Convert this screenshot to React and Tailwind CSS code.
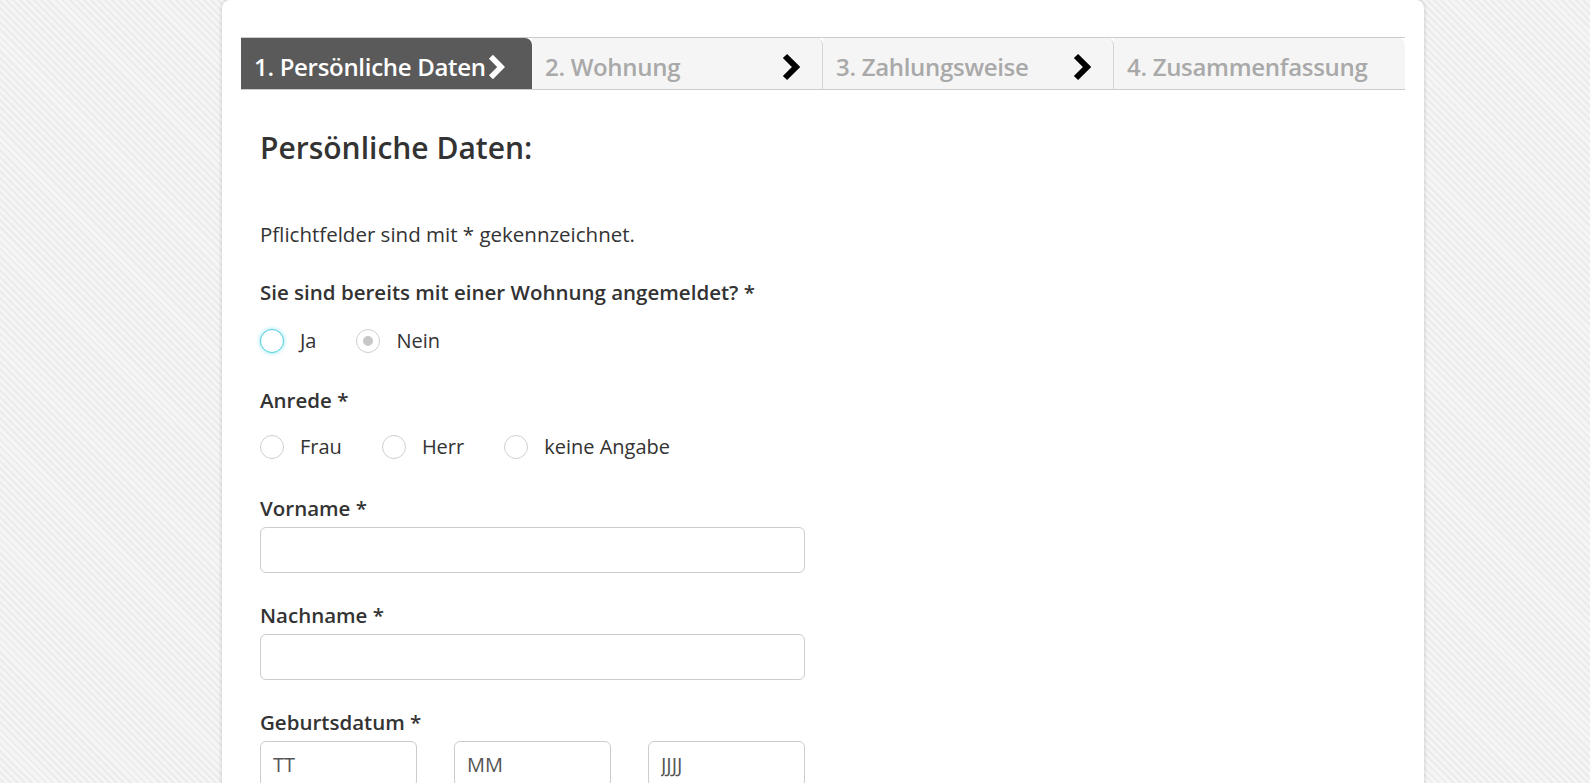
import {useState} from 'react';

const STEPS = ['1. Persönliche Daten', '2. Wohnung', '3. Zahlungsweise', '4. Zusammenfassung'];

function Chevron({className}) {
    return (
        <svg viewBox="0 0 18 28" className={className} fill="none" stroke="currentColor" strokeWidth="6"
             strokeLinejoin="miter">
            <path d="M3 3 14 14 3 25"/>
        </svg>
    );
}

function Radio({label, checked, focused, onClick}) {
    return (
        <button type="button" onClick={onClick} className="flex items-center gap-4 text-[20px] text-[#333]">
            <span
                className={`w-6 h-6 rounded-full border bg-white flex items-center justify-center ${focused ? 'border-[#4fcfe0] shadow-[0_0_4px_#8fe3ee]' : 'border-[#cfcfcf]'}`}>
                {checked && <span className="w-2.5 h-2.5 rounded-full bg-[#c8c8c8]"/>}
            </span>
            <span>{label}</span>
        </button>
    );
}

function Field({label, first, children}) {
    return (
        <div className={first ? 'mt-[31px]' : 'mt-[27px]'}>
            <p className="text-[20.5px] font-semibold text-[#333] leading-[30px]">{label}</p>
            <div className="mt-[4px]">{children}</div>
        </div>
    );
}

export default function App() {
    const [registered, setRegistered] = useState('nein');
    const [salutation, setSalutation] = useState(null);

    return (
        <div
            className="min-h-screen bg-[#f3f3f3] bg-[repeating-linear-gradient(45deg,#f5f5f5_0px,#f5f5f5_3px,#ebebeb_3px,#ebebeb_5px)] pl-[222px]"
            style={{fontFamily: '"Open Sans", "Noto Sans", sans-serif'}}>
            <div
                className="w-[1202px] bg-white rounded-t-lg shadow-[0_0_4px_rgba(0,0,0,0.18)] px-[19px] pt-[37px] pb-10">
                <div className="flex border-t border-b border-[#cccccc]">
                    {STEPS.map((step, i) => (
                        <div key={step}
                             className={`w-[291px] h-[51px] flex items-center rounded-tr-[7px] pl-[13px] pt-[6px] text-[24px] font-semibold ${i === 0 ? 'bg-[#5a5a5a] text-white' : 'bg-[#f5f5f5] text-[#a9a9a9]'} ${i === 1 || i === 2 ? 'border-r border-[#d4d4d4]' : ''}`}>
                            <span className="whitespace-nowrap tracking-[-0.3px]">{step}</span>
                            {i === 0 && <Chevron className="w-[17px] h-[26px] text-white ml-[2px]"/>}
                            {i > 0 && i < 3 && <Chevron className="w-[18px] h-[28px] text-black ml-auto mr-[22px]"/>}
                        </div>
                    ))}
                </div>

                <div className="px-[19px]">
                    <h1 className="mt-[38px] text-[30px] font-semibold text-[#333] leading-[40px]">Persönliche Daten:</h1>
                    <p className="mt-[51px] text-[20.5px] text-[#333] leading-[30px]">Pflichtfelder sind mit * gekennzeichnet.</p>

                    <div className="mt-[28px]">
                        <p className="text-[20.5px] font-semibold text-[#333] leading-[30px]">Sie sind bereits mit einer Wohnung angemeldet? *</p>
                        <div className="mt-[19px] flex gap-[40px]">
                            <Radio label="Ja" focused checked={registered === 'ja'} onClick={() => setRegistered('ja')}/>
                            <Radio label="Nein" checked={registered === 'nein'} onClick={() => setRegistered('nein')}/>
                        </div>
                    </div>

                    <div className="mt-[29px]">
                        <p className="text-[20.5px] font-semibold text-[#333] leading-[30px]">Anrede *</p>
                        <div className="mt-[17px] flex gap-[40px]">
                            {['Frau', 'Herr', 'keine Angabe'].map((s) => (
                                <Radio key={s} label={s} checked={salutation === s} onClick={() => setSalutation(s)}/>
                            ))}
                        </div>
                    </div>

                    <Field label="Vorname *" first>
                        <input className="w-[545px] h-[46px] rounded-md border border-[#cccccc] px-3 text-[20px] outline-none"/>
                    </Field>
                    <Field label="Nachname *">
                        <input className="w-[545px] h-[46px] rounded-md border border-[#cccccc] px-3 text-[20px] outline-none"/>
                    </Field>
                    <Field label="Geburtsdatum *">
                        <div className="flex justify-between w-[545px]">
                            {['TT', 'MM', 'JJJJ'].map((p) => (
                                <input key={p} placeholder={p}
                                       className="w-[157px] h-[46px] rounded-md border border-[#cccccc] px-3 text-[20px] text-[#333] placeholder:text-[#555] outline-none"/>
                            ))}
                        </div>
                    </Field>
                </div>
            </div>
        </div>
    );
}
